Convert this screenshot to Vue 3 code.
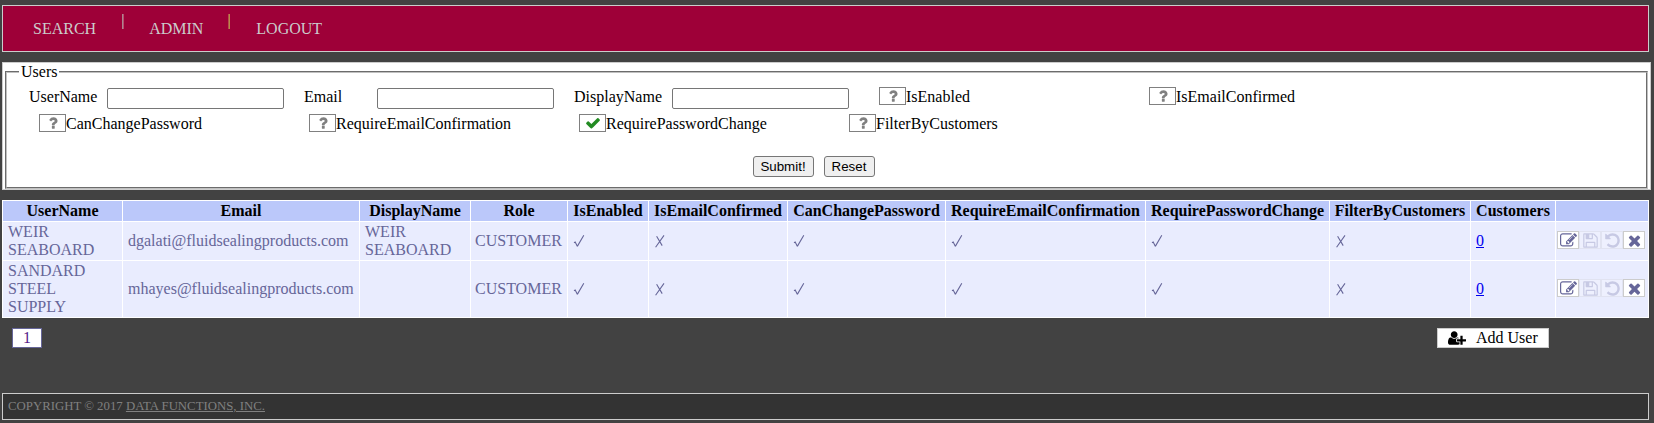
<template>
  <div class="page">
    <nav class="bar">
      <a>SEARCH</a><i class="sep"></i><a>ADMIN</a><i class="sep warm"></i><a>LOGOUT</a>
    </nav>

    <section class="panel">
      <fieldset>
        <legend>Users</legend>
        <div class="fields">
          <div v-for="f in textFields" :key="f" class="field">
            <label>{{ f }}</label><input type="text" />
          </div>
          <div v-for="f in flags" :key="f.name" class="flag" :class="{ shifted: f.shifted }">
            <span class="tri" :class="{ on: f.on }">
              <svg viewBox="0 0 1792 1792"><path :d="f.on ? icons.check : icons.question" /></svg>
            </span>{{ f.name }}
          </div>
        </div>
        <div class="actions"><button>Submit!</button><button class="reset">Reset</button></div>
      </fieldset>
    </section>

    <table>
      <colgroup><col v-for="(w, i) in widths" :key="i" :style="{ width: w + 'px' }" /></colgroup>
      <thead>
        <tr><th v-for="h in headers" :key="h">{{ h }}</th></tr>
      </thead>
      <tbody>
        <tr v-for="r in rows" :key="r.email" :class="r.size">
          <td>{{ r.user }}</td>
          <td>{{ r.email }}</td>
          <td>{{ r.display }}</td>
          <td class="role">CUSTOMER</td>
          <td v-for="(m, i) in marks" :key="i">
            <svg class="mark" viewBox="0 0 12 14"><path :d="m ? tick : cross" /></svg>
          </td>
          <td><a class="count">0</a></td>
          <td class="tools">
            <div>
              <span v-for="t in tools" :key="t.icon" class="tool" :class="{ off: t.off }">
                <svg viewBox="0 0 1792 1792"><path :d="icons[t.icon]" /></svg>
              </span>
            </div>
          </td>
        </tr>
      </tbody>
    </table>

    <div class="below">
      <span class="pager">1</span>
      <span class="add">
        <svg viewBox="0 0 2048 1792"><path :d="icons.userPlus" /></svg>Add User
      </span>
    </div>

    <footer>COPYRIGHT © 2017 <a>DATA FUNCTIONS, INC.</a></footer>
  </div>
</template>

<script setup>
const textFields = ['UserName', 'Email', 'DisplayName']
const flags = [
  { name: 'IsEnabled', shifted: true },
  { name: 'IsEmailConfirmed', shifted: true },
  { name: 'CanChangePassword' },
  { name: 'RequireEmailConfirmation' },
  { name: 'RequirePasswordChange', on: true },
  { name: 'FilterByCustomers' },
]
const headers = ['UserName', 'Email', 'DisplayName', 'Role', 'IsEnabled', 'IsEmailConfirmed', 'CanChangePassword',
  'RequireEmailConfirmation', 'RequirePasswordChange', 'FilterByCustomers', 'Customers', '']
const widths = [120, 237, 111, 97, 81, 139, 158, 200, 184, 141, 85, 93]
const rows = [
  { user: 'WEIR SEABOARD', email: 'dgalati@fluidsealingproducts.com', display: 'WEIR SEABOARD', size: 'two' },
  { user: 'SANDARD STEEL SUPPLY', email: 'mhayes@fluidsealingproducts.com', display: '', size: 'three' },
]
const marks = [true, false, true, true, true, false]
const tools = [
  { icon: 'edit' },
  { icon: 'save', off: true },
  { icon: 'undo', off: true },
  { icon: 'times' },
]
const tick = 'M1 8.8L2.2 8L4.3 12.2M4.3 12.4L10.8 1.2'
const cross = 'M2.6 2.2L8.2 11.6M10 1.4L1.6 13.2'
const icons = {
  check: 'M1671 566q0 40-28 68l-724 724-136 136q-28 28-68 28t-68-28l-136-136-362-362q-28-28-28-68t28-68l136-136q28-28 68-28t68 28l294 295 656-657q28-28 68-28t68 28l136 136q28 28 28 68z',
  times: 'M1490 1322q0 40-28 68l-136 136q-28 28-68 28t-68-28l-294-294-294 294q-28 28-68 28t-68-28l-136-136q-28-28-28-68t28-68l294-294-294-294q-28-28-28-68t28-68l136-136q28-28 68-28t68 28l294 294 294-294q28-28 68-28t68 28l136 136q28 28 28 68t-28 68l-294 294 294 294q28 28 28 68z',
  question: 'M1088 1256v240q0 16-12 28t-28 12h-240q-16 0-28-12t-12-28v-240q0-16 12-28t28-12h240q16 0 28 12t12 28zm316-600q0 54-15.5 101t-35 76.5-55 59.5-57.5 43.5-61 35.5q-41 23-68.5 65t-27.5 67q0 17-12 32.5t-28 15.5h-240q-15 0-25.5-18.5t-10.5-37.5v-45q0-83 65-156.5t143-108.5q59-27 84-56t25-76q0-42-46.5-74t-107.5-32q-65 0-108 29-35 25-107 115-13 16-31 16-12 0-25-8l-164-125q-13-10-15.5-25t5.5-28q160-266 464-266 80 0 161 31t146 83 106 127.5 41 158.5z',
  edit: 'M888 1184l116-116-152-152-116 116v56h96v96h56zm440-720q-16-16-33 1l-350 350q-17 17-1 33t33-1l350-350q17-17 1-33zm80 594v190q0 119-84.5 203.5t-203.5 84.5h-832q-119 0-203.5-84.5t-84.5-203.5v-832q0-119 84.5-203.5t203.5-84.5h832q63 0 117 25 15 7 18 23 3 17-9 29l-49 49q-14 14-32 8-23-6-45-6h-832q-66 0-113 47t-47 113v832q0 66 47 113t113 47h832q66 0 113-47t47-113v-126q0-13 9-22l64-64q15-15 35-7t20 29zm-96-738l288 288-672 672h-288v-288zm444 132l-92 92-288-288 92-92q28-28 68-28t68 28l152 152q28 28 28 68t-28 68z',
  save: 'M512 1536h768v-384h-768v384zm896 0h128v-896q0-14-10-38.5t-20-34.5l-281-281q-10-10-34-20t-39-10v416q0 40-28 68t-68 28h-576q-40 0-68-28t-28-68v-416h-128v1280h128v-416q0-40 28-68t68-28h832q40 0 68 28t28 68v416zm-384-928v-320q0-13-9.5-22.5t-22.5-9.5h-192q-13 0-22.5 9.5t-9.5 22.5v320q0 13 9.5 22.5t22.5 9.5h192q13 0 22.5-9.5t9.5-22.5zm640 32v928q0 40-28 68t-68 28h-1344q-40 0-68-28t-28-68v-1344q0-40 28-68t68-28h928q40 0 88 20t76 48l280 280q28 28 48 76t20 88z',
  undo: 'M1664 896q0 156-61 298t-164 245-245 164-298 61q-172 0-327-72.5t-264-204.5q-7-10-6.5-22.5t8.5-20.5l137-138q10-9 25-9 16 2 23 12 73 95 179 147t225 52q104 0 198.5-40.5t163.5-109.5 109.5-163.5 40.5-198.5-40.5-198.5-109.5-163.5-163.5-109.5-198.5-40.5q-98 0-188 35.5t-160 101.5l137 138q31 30 14 69-17 40-59 40h-448q-26 0-45-19t-19-45v-448q0-42 40-59 39-17 69 14l130 129q107-101 244.5-156.5t284.5-55.5q156 0 298 61t245 164 164 245 61 298z',
  userPlus: 'M704 896q-159 0-271.5-112.5t-112.5-271.5 112.5-271.5 271.5-112.5 271.5 112.5 112.5 271.5-112.5 271.5-271.5 112.5zm960 128h352q13 0 22.5 9.5t9.5 22.5v192q0 13-9.5 22.5t-22.5 9.5h-352v352q0 13-9.5 22.5t-22.5 9.5h-192q-13 0-22.5-9.5t-9.5-22.5v-352h-352q-13 0-22.5-9.5t-9.5-22.5v-192q0-13 9.5-22.5t22.5-9.5h352v-352q0-13 9.5-22.5t22.5-9.5h192q13 0 22.5 9.5t9.5 22.5v352zm-736 224q0 52 38 90t90 38h256v238q-68 50-171 50h-874q-121 0-194-69t-73-190q0-53 3.5-103.5t14-109 26.5-108.5 43-97.5 62-81 85.5-53.5 111.5-20q19 0 39 17 79 61 154.5 91.5t164.5 30.5 164.5-30.5 154.5-91.5q20-17 39-17 132 0 217 96h-223q-52 0-90 38t-38 90v192z',
}
</script>

<style>
html, body { background: #424242; }
</style>

<style scoped>
.page {
  box-sizing: border-box;
  height: 423px;
  padding: 5px 0 0 2px;
  font: 16px/18px "Liberation Serif", "Times New Roman", serif;
  color: #000;
  overflow: hidden;
}
.page * { box-sizing: border-box; }
.bar {
  display: flex;
  width: 1647px;
  height: 47px;
  padding: 8px 0 0 30px;
  background: #9e0038;
  border: 1px solid #ccc;
  color: #ccc;
}
.bar a { padding-top: 6px; }
.sep {
  width: 2px;
  height: 15px;
  margin: 0 25px 0 26px;
  background: linear-gradient(90deg, #ad8590 50%, #b5506f 50%);
}
.sep.warm { margin: 0 26px 0 25px; background: linear-gradient(90deg, #b5504a 50%, #b88a48 50%); }
.panel {
  width: 1649px;
  height: 128px;
  margin-top: 10px;
  padding: 0 2px;
  background: #fff;
  border: 1px solid #ccc;
}
fieldset {
  width: 1643px;
  height: 126px;
  margin: 0;
  padding: 0;
  border: 2px groove rgb(192, 192, 192);
}
legend { margin-left: 12px; padding: 0 2px; height: 18px; }
.fields {
  display: grid;
  grid-template-columns: repeat(5, 270px);
  grid-template-rows: 27px 27px;
  padding: 6px 0 0 22px;
}
.field { display: flex; }
.field label { flex: none; width: 78px; padding-top: 1px; }
.field:nth-child(2) label, .field:nth-child(3) label { padding-left: 5px; }
.field:nth-child(3) label { width: 103px; }
.field input {
  flex: none;
  width: 177px;
  height: 21px;
  margin-top: 1px;
  border: 1px solid #767676;
  border-radius: 2px;
  background: #fff;
}
.flag { display: flex; padding: 1px 0 0 10px; }
.flag.shifted { padding-left: 40px; }
.tri {
  display: flex;
  justify-content: center;
  width: 27px;
  height: 18px;
  margin-top: -1px;
  border: 1px solid #808080;
  fill: #808080;
}
.tri svg { width: 16px; height: 16px; margin-left: 1px; }
.tri.on { fill: #228b22; }
.actions { display: flex; justify-content: center; gap: 10px; padding: 15px 26px 0 0; }
.actions button {
  width: 61px;
  height: 21px;
  padding: 0;
  font: 13.333px "Liberation Sans", Arial, sans-serif;
  color: #000;
  background: #efefef;
  border: 1px solid #767676;
  border-radius: 3px;
}
.actions .reset { width: 51px; }
table {
  width: 1647px;
  margin-top: 10px;
  table-layout: fixed;
  border-collapse: collapse;
  color: #669;
}
th, td { border: 1px solid #fff; padding: 0 5px; height: 21px; text-align: left; background: #e9ecfe; }
th { background: #bbc8fa; color: #000; text-align: center; padding: 0; }
.two td { height: 39px; }
.three td { height: 57px; }
td.role { padding-left: 4px; }
.mark { display: block; width: 12px; height: 14px; fill: none; stroke: #669; stroke-width: 1.1; }
.count { color: #00e; text-decoration: underline; }
td.tools { padding: 0 0 2px 1px; }
.tools div { display: flex; }
.tool {
  display: flex;
  justify-content: center;
  align-items: center;
  width: 22px;
  height: 18px;
  border: 1px solid #ccc;
  background: #fff;
  fill: #669;
}
.tool svg { flex: none; width: 17px; height: 17px; }
.tool.off { opacity: .25; }
.below { display: flex; justify-content: space-between; width: 1547px; padding: 10px 0 0 10px; }
.pager, .add { height: 20px; background: #fff; }
.pager { width: 30px; border: 1px solid #669; text-align: center; color: #551a8b; }
.add { display: flex; width: 112px; padding-left: 10px; border: 1px solid #ccc; }
.add svg { width: 18px; height: 16px; margin: 1px 10px 0 0; }
footer {
  width: 1647px;
  height: 27px;
  margin-top: 45px;
  padding: 3px 5px;
  border: 1px solid #ccc;
  background: #333;
  color: #808080;
  font-size: 12.8px;
}
footer a { text-decoration: underline; }
</style>
